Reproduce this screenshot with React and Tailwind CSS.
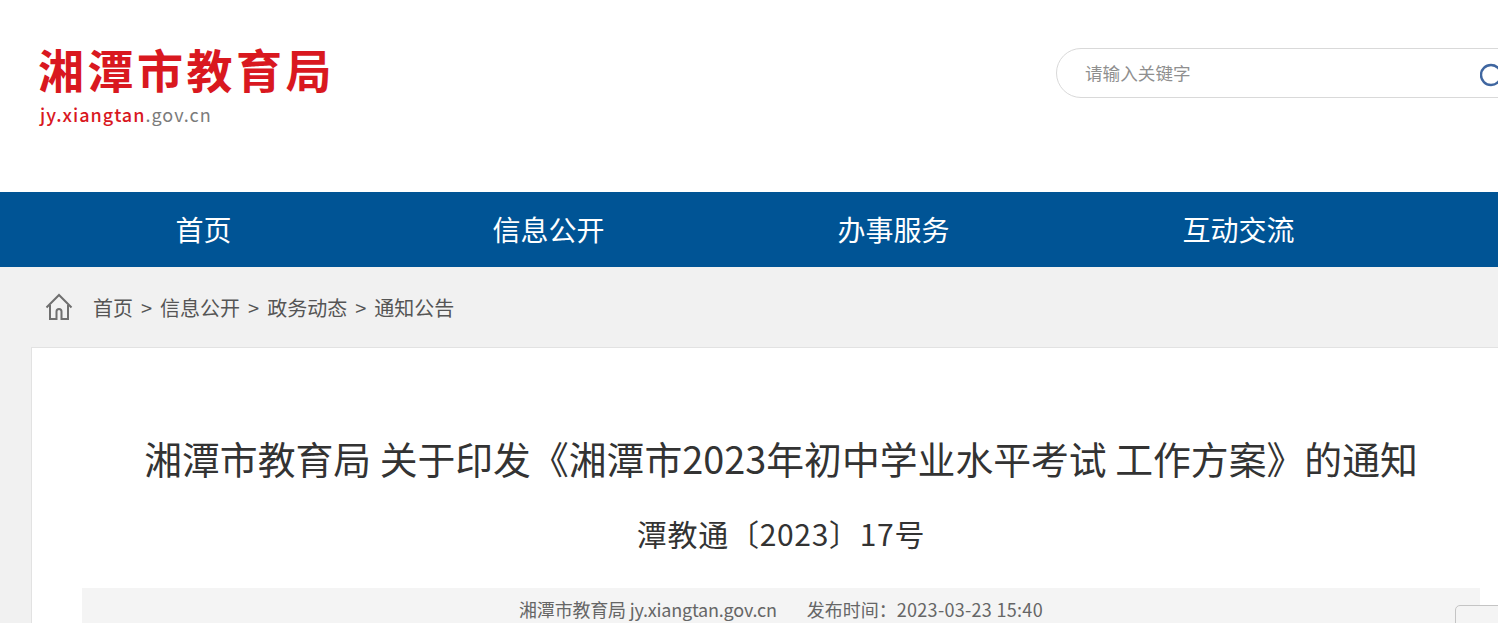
import React from 'react';

const cjk = { fontFamily: '"Noto Sans CJK SC", "Noto Sans", sans-serif' };

const navItems = ['首页', '信息公开', '办事服务', '互动交流'];
const crumbs = ['首页', '信息公开', '政务动态', '通知公告'];

const HomeIcon = () => (
  <svg width="30" height="30" viewBox="0 0 30 30" fill="none" stroke="#6f6f6f" strokeWidth="2">
    <path d="M2.5 15.5 15 3l12.5 12.5" />
    <path d="M6 13v14h6.5v-7.5a2.5 2.5 0 0 1 5 0V27H24V13" />
  </svg>
);

const App = () => {
  return (
    <div className="relative w-full h-screen overflow-hidden bg-[#f1f1f1]" style={cjk}>
      <div className="w-[1600px]">
        {/* Header */}
        <header className="h-[192px] bg-white flex items-start">
          <div className="ml-[38px] mt-[38px] w-[320px]">
            <div className="text-[46px] leading-[60px] font-bold tracking-[3.5px] text-[#d9181f] whitespace-nowrap">湘潭市教育局</div>
            <div className="mt-[4px] ml-[2px] text-[18px] leading-[24px] font-medium tracking-[1px] text-[#d9181f]">
              jy.xiangtan<span className="text-[#7b7b7b] font-normal">.gov.cn</span>
            </div>
          </div>
          <div className="ml-[698px] mt-[48px] w-[500px] h-[50px] rounded-full border border-[#d9d9d9] flex items-center pl-[28px]">
            <span className="text-[17.6px] text-[#8f8f8f]">请输入关键字</span>
            <svg className="ml-[289.4px] mt-[4px]" width="24" height="24" viewBox="0 0 24 24" fill="none" stroke="#3f66a0" strokeWidth="2.4">
              <circle cx="11" cy="12" r="10" />
              <path d="m18 19 5 5" />
            </svg>
          </div>
        </header>

        {/* Nav */}
        <nav className="h-[75px] bg-[#005495] pl-[31px] pb-[2px] grid grid-cols-[repeat(4,345px)] items-center">
          {navItems.map(item => (
            <a key={item} className="text-center text-[28px] text-white">{item}</a>
          ))}
        </nav>

        {/* Breadcrumb */}
        <div className="h-[80px] pl-[44px] flex items-center text-[20px] text-[#555]">
          <HomeIcon />
          <div className="ml-[19px] pt-[2px] flex items-center">
            {crumbs.map((c, i) => (
              <React.Fragment key={c}>
                {i > 0 && <span className="mx-[8px]">&gt;</span>}
                <span>{c}</span>
              </React.Fragment>
            ))}
          </div>
        </div>

        {/* Article */}
        <main className="ml-[31px] w-[1500px] h-[400px] bg-white border border-[#e2e2e2] pt-[82px] pl-[50px]">
          <div className="w-[1398px]">
            <h1 className="text-center text-[37.85px] leading-[56px] text-[#333] whitespace-nowrap">
              湘潭市教育局 关于印发《湘潭市2023年初中学业水平考试 工作方案》的通知
            </h1>
            <h2 className="mt-[25px] text-center text-[30px] leading-[44px] tracking-[0.7px] text-[#333]">潭教通〔2023〕17号</h2>
            <div className="mt-[33px] h-[60px] bg-[#f4f4f4] pt-[8px] text-center text-[18px] leading-[27px] text-[#666]">
              <span className="tracking-[-0.2px]">湘潭市教育局 jy.xiangtan.gov.cn</span>
              <span className="ml-[30px]">发布时间：<span className="tracking-[0.3px]">2023-03-23 15:40</span></span>
            </div>
          </div>
        </main>
      </div>

      {/* Floating box at the lower right */}
      <div className="absolute left-[1455px] top-[605px] w-[60px] h-[40px] rounded-t-[5px] border border-[#c4c4c4] bg-[#f4f4f4]" />
    </div>
  );
};

export default App;
